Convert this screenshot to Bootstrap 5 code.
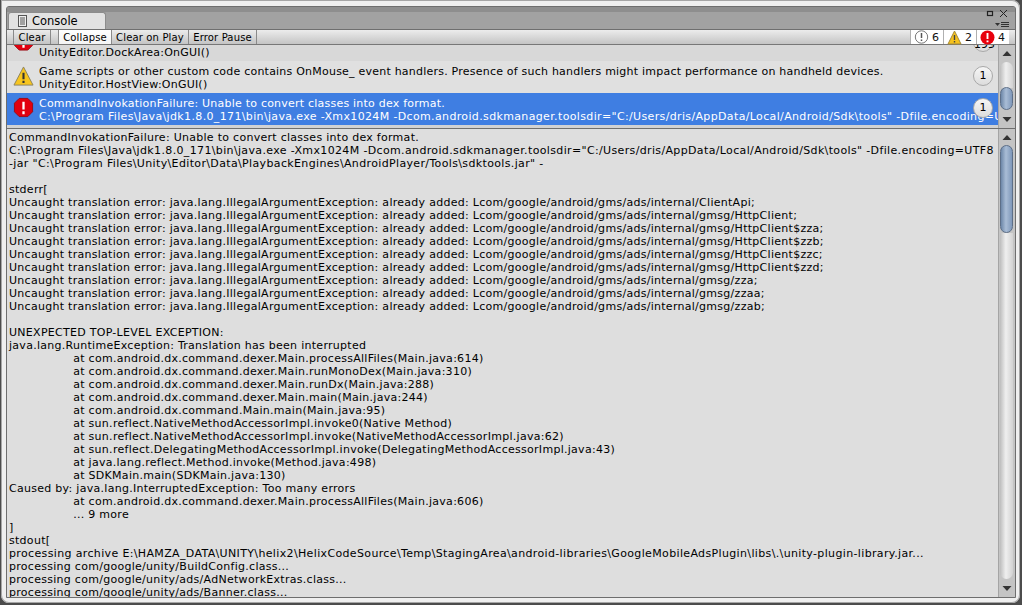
<!DOCTYPE html>
<html lang="en">
<head>
<meta charset="utf-8">
<title>Console</title>
<link href="https://cdn.jsdelivr.net/npm/bootstrap@5.3.0/dist/css/bootstrap.min.css" rel="stylesheet">
<style>
html,body{height:605px;overflow:hidden;background:#4c4c4c;}
body{font:11px/13px "DejaVu Sans",sans-serif;color:#000;}
.win{width:1019px;height:603px;margin-left:1px;background:#efefef;border-radius:0 8px 8px 8px;padding:6px 4px 5px 5px;box-shadow:inset 0 0 0 1px #a6a6a6;}
.inner{height:100%;border:1px solid #6e6e6e;border-radius:3px 3px 0 0;background:#a2a2a2;overflow:hidden;}
.tabbar{height:22px;flex:none;padding:5px 0 0 1px;position:relative;background:linear-gradient(#8e8e8e 0,#8e8e8e 5px,#a2a2a2 5px);}
.tabx{width:98px;height:17px;background:#e2e2e2;border:1px solid #8c8c8c;border-bottom:0;border-radius:3px 3px 0 0;font-size:11.5px;line-height:18px;padding-left:9px;gap:5px;}
.winbtn{position:absolute;right:5px;top:3px;}
.toolbar{height:16px;flex:none;background:linear-gradient(#ececec,#c4c4c4);border-top:1px solid #6f6f6f;border-bottom:1px solid #777;padding-left:6px;font-size:10px;letter-spacing:.15px;line-height:15px;}
.tb{border-right:1px solid #8a8a8a;height:14px;text-align:center;}
.tb.first{border-left:1px solid #8a8a8a;margin-right:7px;width:38px;}
.tb.on{background:linear-gradient(#fff,#f4f4f4);border-left:1px solid #8a8a8a;width:54px;}
.tb.w3{width:77px;}
.tb.w4{width:68px;}
.counts{margin-left:auto;margin-right:6px;background:#fff;height:14px;}
.cnt{width:33px;padding-left:3px;gap:3px;border-left:1px solid #b0b0b0;color:#111;letter-spacing:0;line-height:15px;font-size:11px;}
.upper{height:83px;flex:none;background:#d2d2d2;}
.lst{flex:1;overflow:hidden;min-width:0;}
.rw{height:32px;padding:4px 0 0 32px;position:relative;white-space:nowrap;overflow:hidden;letter-spacing:.22px;}
.rw.r0{height:16px;background:#d8d8d8;padding-top:1px;}
.rw.r1{background:#e0e0e0;}
.rw.r2{background:#3f7ee2;color:#fff;}
.pth{letter-spacing:.355px;}
.ico{position:absolute;left:6px;top:5px;}
.r0 .ico{top:-15px;}
.r2 .ico{top:4px;}
.pill{position:absolute;right:5px;top:5px;width:20px;height:20px;border-radius:50%;background:linear-gradient(#f6f6f6,#dcdcdc);border:1px solid #a8a8a8;text-align:center;color:#000;line-height:18px;font-size:11px;letter-spacing:0;}
.r0 .pill{top:-13px;line-height:24px;}
.vsb{width:17px;flex:none;background:#c4c4c4;border-left:1px solid #a4a4a4;position:relative;}
.arr{height:16px;flex:none;}
.track{flex:1;position:relative;}
.thumb{position:absolute;left:1px;right:2px;border-radius:7px;}
.thumb.blue{background:linear-gradient(90deg,#6d87a8,#a9bdd6 45%,#7f98ba);border:1px solid #5d6f88;}
.thumb.pale{background:linear-gradient(90deg,#bdbdbd,#efefef 45%,#d2d2d2);border-radius:7px 7px 0 0;}
.thumb.pale.low{border-radius:0 0 7px 7px;}
.split{height:1px;flex:none;background:#6e6e6e;}
.lower{flex:1;min-height:0;background:#dedede;}
.logtxt{flex:1;min-width:0;overflow:hidden;padding:2px 0 0 2px;white-space:pre;letter-spacing:.28px;tab-size:17;}
</style>
</head>
<body>
<div class="win">
<div class="inner d-flex flex-column">
  <div class="tabbar d-flex">
    <div class="tabx d-flex align-items-center">
      <svg width="9" height="12" viewBox="0 0 9 12"><rect x=".5" y=".5" width="8" height="11" fill="#eee" stroke="#555"/><path d="M2 3h5M2 5h5M2 7h5M2 9h5" stroke="#555"/></svg>
      <span>Console</span>
    </div>
    <svg class="winbtn" width="26" height="20" viewBox="0 0 26 20"><rect x="3.500" y="1.500" width="5" height="4" fill="none" stroke="#222" stroke-width="1.200"/><path d="M16 0l7 7M23 0l-7 7" stroke="#222" fill="none"/><path d="M11 13h5l-2.500 3z" fill="#333"/><path d="M17 12.500h8M17 14.500h8M17 16.500h8" stroke="#333"/></svg>
  </div>
  <div class="toolbar d-flex">
    <div class="tb first">Clear</div>
    <div class="tb on">Collapse</div>
    <div class="tb w3">Clear on Play</div>
    <div class="tb w4">Error Pause</div>
    <div class="counts d-flex">
      <div class="cnt d-flex"><svg width="15" height="15" viewBox="0 0 15 15"><circle cx="7.500" cy="7" r="6.200" fill="#fff" stroke="#777"/><path d="M7.500 3v5M7.500 9.500v1.600" stroke="#555" stroke-width="1.500"/></svg>6</div>
      <div class="cnt d-flex"><svg width="15" height="15" viewBox="0 0 15 15"><path d="M7.500 1L14 14H1z" fill="#f6c21c" stroke="#a58a3a"/><path d="M7.500 5v5M7.500 11v1.600" stroke="#444" stroke-width="1.400"/></svg>2</div>
      <div class="cnt d-flex"><svg width="15" height="15" viewBox="0 0 15 15"><circle cx="7.500" cy="7.500" r="7" fill="#e8000c"/><path d="M7.500 3v6M7.500 10.400v1.800" stroke="#fff" stroke-width="1.900"/></svg>4</div>
    </div>
  </div>
  <div class="upper d-flex">
    <div class="lst">
      <div class="rw r0">UnityEditor.DockArea:OnGUI()
        <svg class="ico" width="21" height="22" viewBox="0 0 22 22"><path d="M6.500 1.500h9l5 5v9l-5 5h-9l-5-5v-9z" fill="#e2000f" stroke="#9c0a14"/><path d="M11 5v8M11 15v3" stroke="#fff" stroke-width="2.400"/></svg>
        <span class="pill">195</span></div>
      <div class="rw r1">Game scripts or other custom code contains OnMouse_ event handlers. Presence of such handlers might impact performance on handheld devices.<br>UnityEditor.HostView:OnGUI()
        <svg class="ico" width="21" height="21" viewBox="0 0 22 22"><path d="M11 1L21 20H1z" fill="#f7c51f" stroke="#8c8260" stroke-linejoin="round"/><path d="M11 7v7M11 15.500v2.400" stroke="#333" stroke-width="2.200"/></svg>
        <span class="pill">1</span></div>
      <div class="rw r2">CommandInvokationFailure: Unable to convert classes into dex format.<br><span class="pth">C:\Program Files\Java\jdk1.8.0_171\bin\java.exe -Xmx1024M -Dcom.android.sdkmanager.toolsdir="C:/Users/dris/AppData/Local/Android/Sdk\tools" -Dfile.encoding=UTF8</span>
        <svg class="ico" width="21" height="21" viewBox="0 0 22 22"><path d="M6.500 1.500h9l5 5v9l-5 5h-9l-5-5v-9z" fill="#e2000f" stroke="#9c0a14"/><path d="M11 5v8M11 15v3" stroke="#fff" stroke-width="2.400"/></svg>
        <span class="pill">1</span></div>
    </div>
    <div class="vsb d-flex flex-column">
      <div class="arr"><svg width="16" height="16" viewBox="0 0 16 16"><path d="M3.500 11h9L8 6z" fill="#333"/></svg></div>
      <div class="track">
        <div class="thumb pale" style="top:1px;height:26px"></div>
        <div class="thumb blue" style="top:26px;height:23px"></div>
      </div>
      <div class="arr"><svg width="16" height="16" viewBox="0 0 16 16"><path d="M3.500 5h9L8 10z" fill="#333"/></svg></div>
    </div>
  </div>
  <div class="split"></div>
  <div class="lower d-flex">
    <div class="logtxt">CommandInvokationFailure: Unable to convert classes into dex format.
<span class="pth">C:\Program Files\Java\jdk1.8.0_171\bin\java.exe -Xmx1024M -Dcom.android.sdkmanager.toolsdir="C:/Users/dris/AppData/Local/Android/Sdk\tools" -Dfile.encoding=UTF8</span>
<span class="pth">-jar "C:\Program Files\Unity\Editor\Data\PlaybackEngines\AndroidPlayer/Tools\sdktools.jar" -</span>

stderr[
Uncaught translation error: java.lang.IllegalArgumentException: already added: Lcom/google/android/gms/ads/internal/ClientApi;
Uncaught translation error: java.lang.IllegalArgumentException: already added: Lcom/google/android/gms/ads/internal/gmsg/HttpClient;
Uncaught translation error: java.lang.IllegalArgumentException: already added: Lcom/google/android/gms/ads/internal/gmsg/HttpClient$zza;
Uncaught translation error: java.lang.IllegalArgumentException: already added: Lcom/google/android/gms/ads/internal/gmsg/HttpClient$zzb;
Uncaught translation error: java.lang.IllegalArgumentException: already added: Lcom/google/android/gms/ads/internal/gmsg/HttpClient$zzc;
Uncaught translation error: java.lang.IllegalArgumentException: already added: Lcom/google/android/gms/ads/internal/gmsg/HttpClient$zzd;
Uncaught translation error: java.lang.IllegalArgumentException: already added: Lcom/google/android/gms/ads/internal/gmsg/zza;
Uncaught translation error: java.lang.IllegalArgumentException: already added: Lcom/google/android/gms/ads/internal/gmsg/zzaa;
Uncaught translation error: java.lang.IllegalArgumentException: already added: Lcom/google/android/gms/ads/internal/gmsg/zzab;

UNEXPECTED TOP-LEVEL EXCEPTION:
java.lang.RuntimeException: Translation has been interrupted
	at com.android.dx.command.dexer.Main.processAllFiles(Main.java:614)
	at com.android.dx.command.dexer.Main.runMonoDex(Main.java:310)
	at com.android.dx.command.dexer.Main.runDx(Main.java:288)
	at com.android.dx.command.dexer.Main.main(Main.java:244)
	at com.android.dx.command.Main.main(Main.java:95)
	at sun.reflect.NativeMethodAccessorImpl.invoke0(Native Method)
	at sun.reflect.NativeMethodAccessorImpl.invoke(NativeMethodAccessorImpl.java:62)
	at sun.reflect.DelegatingMethodAccessorImpl.invoke(DelegatingMethodAccessorImpl.java:43)
	at java.lang.reflect.Method.invoke(Method.java:498)
	at SDKMain.main(SDKMain.java:130)
Caused by: java.lang.InterruptedException: Too many errors
	at com.android.dx.command.dexer.Main.processAllFiles(Main.java:606)
	... 9 more
]
stdout[
<span class="pth">processing archive E:\HAMZA_DATA\UNITY\helix2\HelixCodeSource\Temp\StagingArea\android-libraries\GoogleMobileAdsPlugin\libs\.\unity-plugin-library.jar...</span>
processing com/google/unity/BuildConfig.class...
processing com/google/unity/ads/AdNetworkExtras.class...
processing com/google/unity/ads/Banner.class...</div>
    <div class="vsb d-flex flex-column">
      <div class="arr"><svg width="16" height="16" viewBox="0 0 16 16"><path d="M3.500 11h9L8 6z" fill="#333"/></svg></div>
      <div class="track">
        <div class="thumb blue" style="top:0;height:88px"></div>
        <div class="thumb pale low" style="top:88px;bottom:2px"></div>
      </div>
      <div class="arr"><svg width="16" height="16" viewBox="0 0 16 16"><path d="M3.500 5h9L8 10z" fill="#333"/></svg></div>
    </div>
  </div>
</div>
</div>
</body>
</html>
